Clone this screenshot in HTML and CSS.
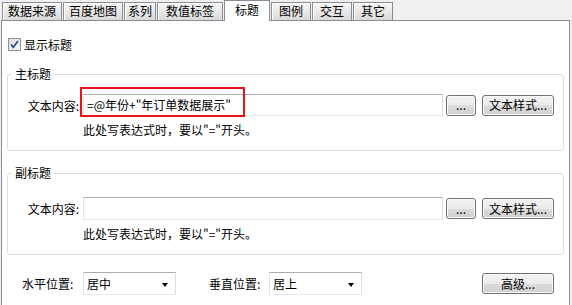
FILE: index.html
```html
<!DOCTYPE html>
<html lang="zh-CN">
<head>
    <meta charset="UTF-8">
    <meta name="viewport" content="width=device-width, initial-scale=1.0">
    <title>标题设置</title>
    <link rel="stylesheet" href="styles.css">
</head>
<body>
    <div class="tabs">
        <div class="tab">数据来源</div>
        <div class="tab">百度地图</div>
        <div class="tab tab-narrow">系列</div>
        <div class="tab tab-wide">数值标签</div>
        <div class="tab tab-active">标题</div>
        <div class="tab tab-short">图例</div>
        <div class="tab tab-short">交互</div>
        <div class="tab tab-short">其它</div>
    </div>

    <div class="panel">
        <label class="check-row">
            <span class="checkbox">
                <svg width="11" height="11" viewBox="0 0 11 11"><path d="M2 5.5 L4.3 8.2 L9 2" fill="none" stroke="#3b4f8c" stroke-width="1.8"/></svg>
            </span>
            显示标题
        </label>

        <fieldset class="group">
            <legend>主标题</legend>
            <div class="field-row">
                <span class="field-label">文本内容:</span>
                <div class="input-wrap">
                    <div class="text-input">=@年份+"年订单数据展示"</div>
                    <div class="highlight"></div>
                </div>
                <button class="btn btn-dots">...</button>
                <button class="btn btn-style">文本样式...</button>
            </div>
            <div class="hint">此处写表达式时，要以"="开头。</div>
        </fieldset>

        <fieldset class="group group-sub">
            <legend>副标题</legend>
            <div class="field-row">
                <span class="field-label">文本内容:</span>
                <div class="input-wrap">
                    <div class="text-input"></div>
                </div>
                <button class="btn btn-dots">...</button>
                <button class="btn btn-style">文本样式...</button>
            </div>
            <div class="hint">此处写表达式时，要以"="开头。</div>
        </fieldset>

        <div class="position-row">
            <span class="pos-label">水平位置:</span>
            <div class="select">居中<span class="arrow"></span></div>
            <span class="pos-label pos-label-second">垂直位置:</span>
            <div class="select">居上<span class="arrow"></span></div>
            <button class="btn btn-style btn-advanced">高级...</button>
        </div>
    </div>
</body>
</html>
```

FILE: styles.css
```css
html, body {
    margin: 0;
    height: 305px;
    overflow: hidden;
}

body {
    font-family: "Noto Sans CJK SC", "Liberation Sans", sans-serif;
    font-size: 12px;
    color: #000;
    background: #f0f0f0;
}

.tabs {
    display: flex;
    align-items: flex-end;
    gap: 1px;
    height: 20px;
    padding-left: 2px;
}

.tab {
    height: 17px;
    line-height: 16px;
    padding: 0 5px;
    border: 1px solid #898c95;
    border-bottom: none;
    background: linear-gradient(#f6f6f6, #e8e8e8 50%, #d9d9d9);
    box-shadow: inset 1px 1px 0 #fff;
    white-space: nowrap;
}

.tab-narrow {
    padding: 0 3px;
}

.tab-wide {
    padding: 0 8px;
}

.tab-short {
    padding: 0 7px;
}

.tab-active {
    position: relative;
    z-index: 1;
    height: 20px;
    margin-bottom: -1px;
    padding: 0 10px;
    line-height: 17px;
    background: #fff;
    box-shadow: none;
}

.panel {
    box-sizing: border-box;
    height: 285px;
    margin: 0 2px 0 1px;
    border: 1px solid #898c95;
    border-bottom: none;
    background: #fff;
    padding-top: 17px;
}

.check-row {
    display: flex;
    align-items: center;
    height: 13px;
    padding-left: 6px;
    gap: 3px;
}

.checkbox {
    display: flex;
    align-items: center;
    justify-content: center;
    width: 11px;
    height: 11px;
    border: 1px solid #8f8f8f;
    background: linear-gradient(135deg, #dcdcdc, #fbfbfb);
}

.group {
    margin: 15px 5px 0;
    padding: 0 0 12px 4px;
    border: 1px solid #d5dfe5;
    border-radius: 3px;
}

.group legend {
    padding: 0 3px;
    line-height: 16px;
}

.group-sub {
    margin-top: 14px;
}

.field-row {
    display: flex;
    align-items: center;
    margin-top: 12px;
    margin-left: -4px;
}

.group-sub .field-row {
    margin-top: 16px;
}

.field-label {
    width: 52px;
    padding-left: 19px;
    padding-right: 4px;
    text-align: right;
    white-space: nowrap;
}

.input-wrap {
    position: relative;
}

.text-input {
    box-sizing: border-box;
    width: 360px;
    height: 22px;
    line-height: 20px;
    padding-left: 3px;
    border: 1px solid;
    border-color: #abadb3 #dbdfe6 #e3e9ef #e2e3ea;
    white-space: nowrap;
}

.group-sub .text-input {
    height: 23px;
}

.highlight {
    position: absolute;
    left: -3px;
    top: -7px;
    width: 161px;
    height: 26px;
    border: 2px solid #e5141c;
}

.btn {
    box-sizing: border-box;
    height: 21px;
    padding: 0;
    border: 1px solid #707070;
    border-radius: 3px;
    background: linear-gradient(#f2f2f2, #ebebeb 50%, #dddddd 50%, #cfcfcf);
    box-shadow: inset 0 0 0 1px #fbfbfb;
    font: inherit;
    line-height: 18px;
    color: #000;
}

.btn-dots {
    width: 30px;
    margin-left: 3px;
}

.btn-style {
    width: 72px;
    margin-left: 6px;
}

.hint {
    margin: 6px 0 0 71px;
    line-height: 16px;
}

.position-row {
    display: flex;
    align-items: center;
    margin-top: 17px;
    padding-left: 20px;
}

.pos-label {
    width: 61px;
    white-space: nowrap;
}

.pos-label-second {
    margin-left: 33px;
    width: 60px;
}

.select {
    box-sizing: border-box;
    position: relative;
    width: 93px;
    height: 23px;
    line-height: 21px;
    padding-left: 3px;
    border: 1px solid;
    border-color: #abadb3 #dbdfe6 #e3e9ef #e2e3ea;
}

.arrow {
    position: absolute;
    right: 7px;
    top: 10px;
    border-left: 3px solid transparent;
    border-right: 3px solid transparent;
    border-top: 4px solid #000;
}

.btn-advanced {
    margin-left: auto;
    margin-right: 15px;
}
```
